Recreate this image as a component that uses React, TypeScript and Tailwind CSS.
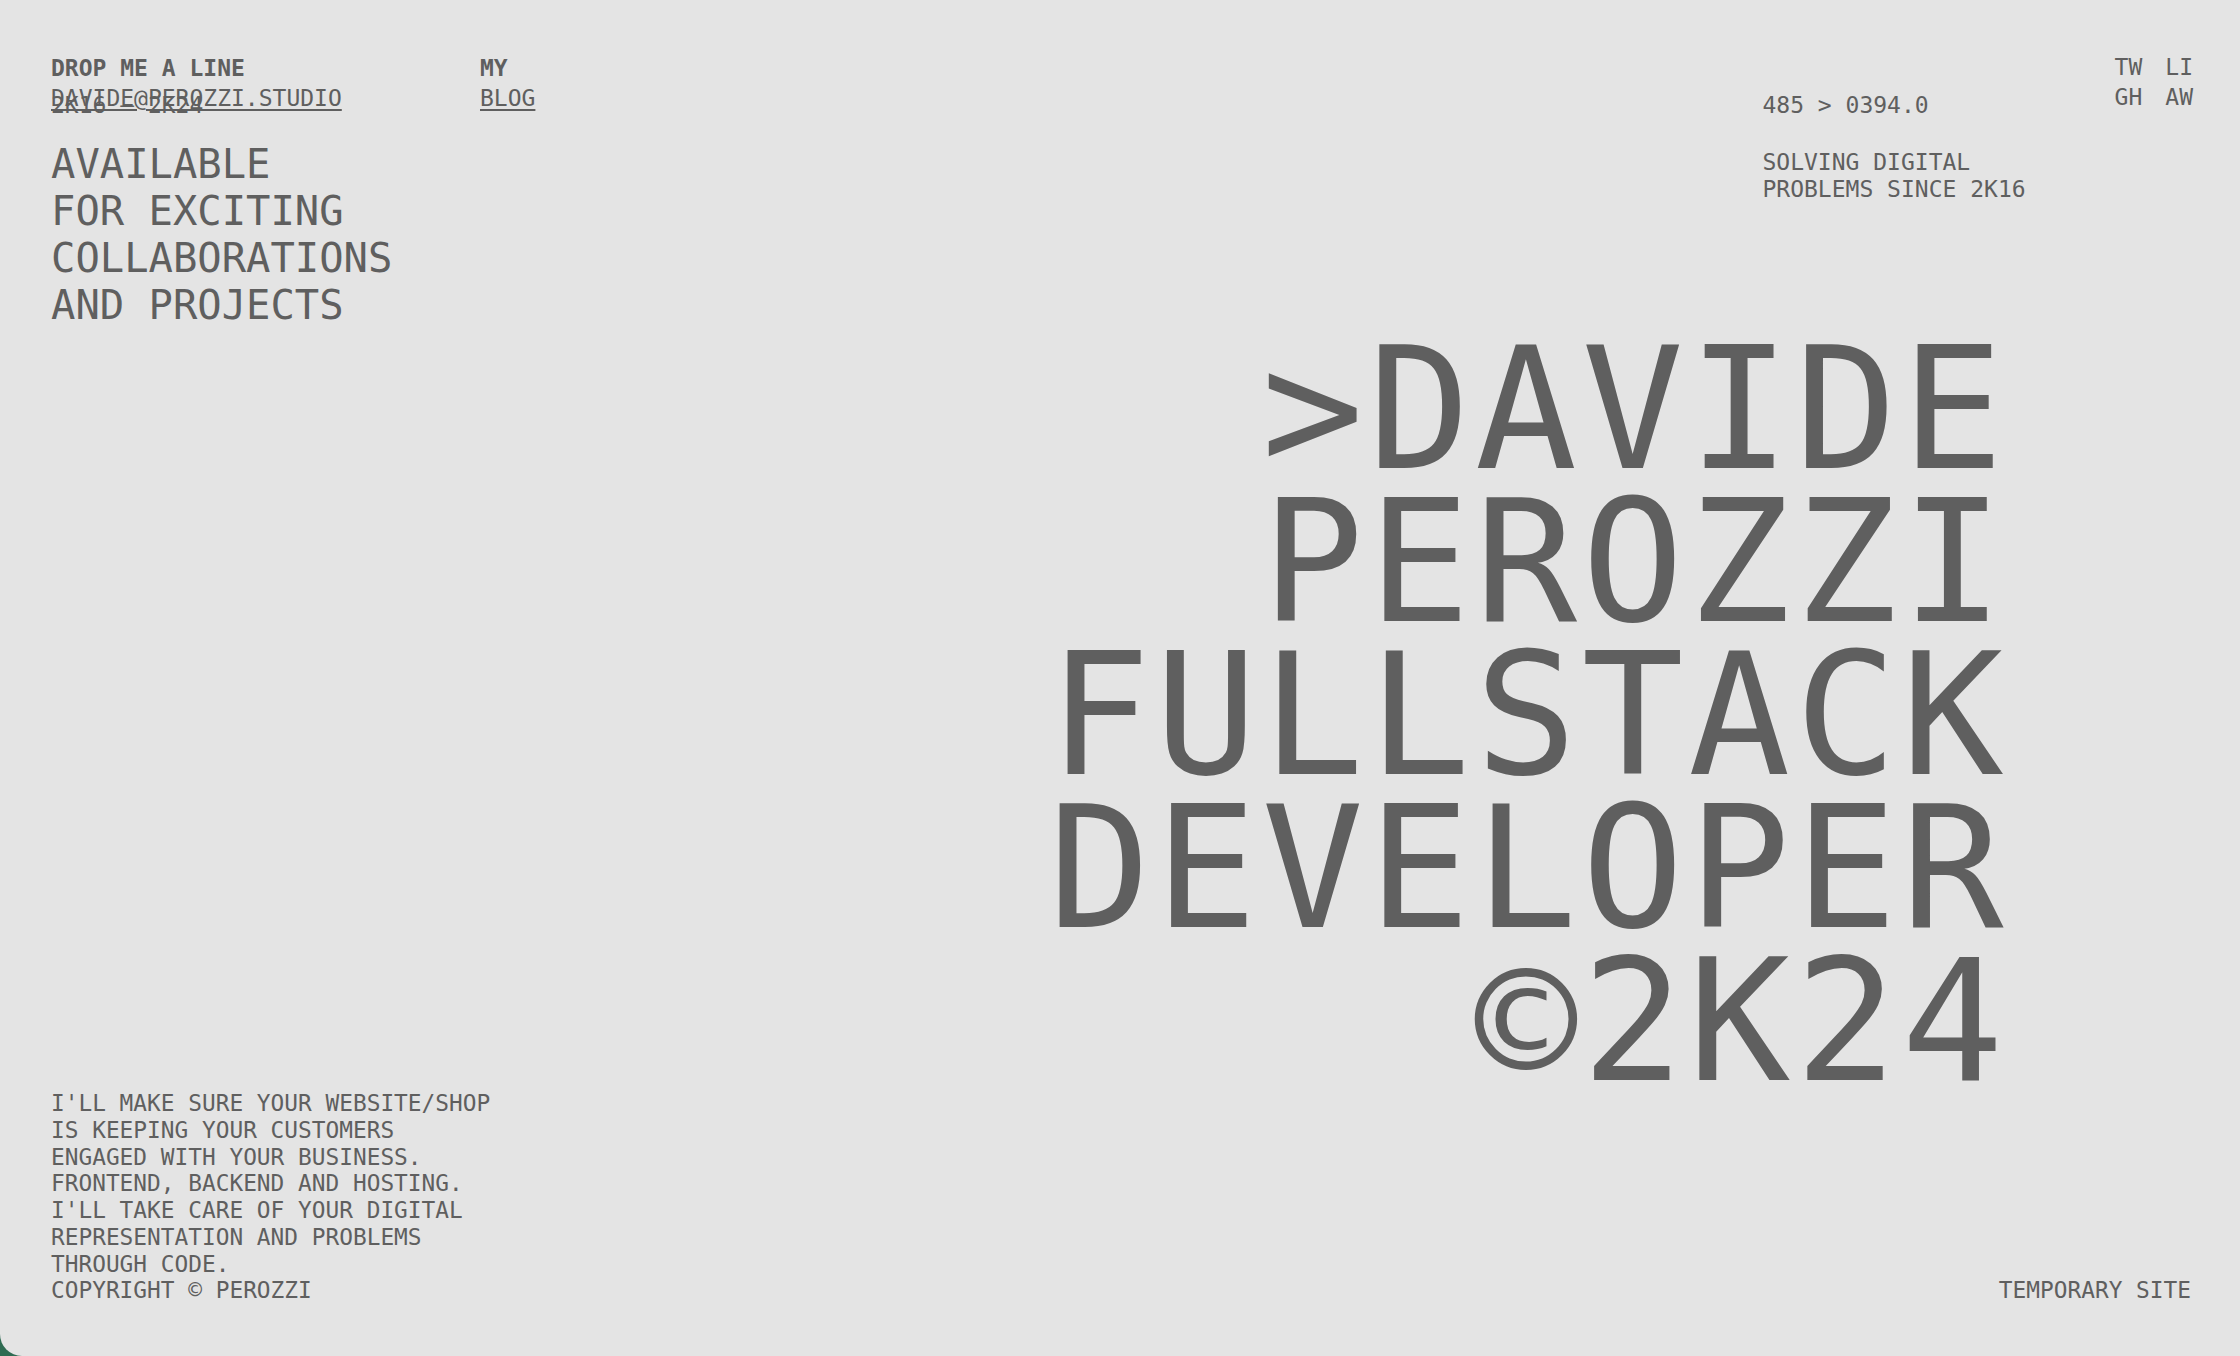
export default function App() {
  const bio = [
    "I'LL MAKE SURE YOUR WEBSITE/SHOP",
    "IS KEEPING YOUR CUSTOMERS",
    "ENGAGED WITH YOUR BUSINESS.",
    "FRONTEND, BACKEND AND HOSTING.",
    "I'LL TAKE CARE OF YOUR DIGITAL",
    "REPRESENTATION AND PROBLEMS",
    "THROUGH CODE.",
  ];

  const title = [">DAVIDE", "PEROZZI", "FULLSTACK", "DEVELOPER", "©2K24"];

  return (
    <div className="w-full h-[1356px] bg-[#2f6b52] overflow-hidden">
      <main className="h-full flex flex-col bg-[#e4e4e4] rounded-bl-[22px] pt-[53px] pb-[52px] pl-[51px] pr-[47px] text-[#5f5f5f] font-['DejaVu_Sans_Mono',monospace]">
        {/* Header */}
        <header className="flex justify-between">
          <div className="flex">
            <div className="w-[429px]">
              <div className="text-[23px] leading-[30px]">
                <p className="font-bold">DROP ME A LINE</p>
                <div className="relative">
                  <a href="#" className="underline underline-offset-[3px]">
                    DAVIDE@PEROZZI.STUDIO
                  </a>
                  <span className="absolute left-0 top-[7px] whitespace-nowrap">
                    2K16 — 2K24
                  </span>
                </div>
              </div>
              <p className="mt-[28px] text-[40.5px] leading-[47px]">
                AVAILABLE
                <br />
                FOR EXCITING
                <br />
                COLLABORATIONS
                <br />
                AND PROJECTS
              </p>
            </div>
            <div className="text-[23px] leading-[30px]">
              <p className="font-bold">MY</p>
              <a href="#" className="underline underline-offset-[3px]">
                BLOG
              </a>
            </div>
          </div>

          <div className="flex gap-[89px] text-[23px]">
            <div className="pt-[39px] leading-[27px]">
              <p>485 &gt; 0394.0</p>
              <p className="mt-[30px]">
                SOLVING DIGITAL
                <br />
                PROBLEMS SINCE 2K16
              </p>
            </div>
            <div className="grid grid-cols-2 gap-x-[23px] h-fit -mt-px leading-[30px]">
              <a href="#">TW</a>
              <a href="#">LI</a>
              <a href="#">GH</a>
              <a href="#">AW</a>
            </div>
          </div>
        </header>

        {/* Title */}
        <h1 className="self-end mt-[4px] -mb-[9px] mr-[185px] text-right text-[170px] leading-[153px] tracking-[4.3px]">
          {title.map((line, i) => (
            <span key={i} className="block">
              {line}
            </span>
          ))}
        </h1>

        {/* Footer */}
        <footer className="mt-auto flex justify-between items-end text-[22.8px] leading-[26.7px]">
          <div>
            {bio.map((line, i) => (
              <p key={i}>{line}</p>
            ))}
            <p>COPYRIGHT © PEROZZI</p>
          </div>
          <p className="mr-[2px]">TEMPORARY SITE</p>
        </footer>
      </main>
    </div>
  );
}
